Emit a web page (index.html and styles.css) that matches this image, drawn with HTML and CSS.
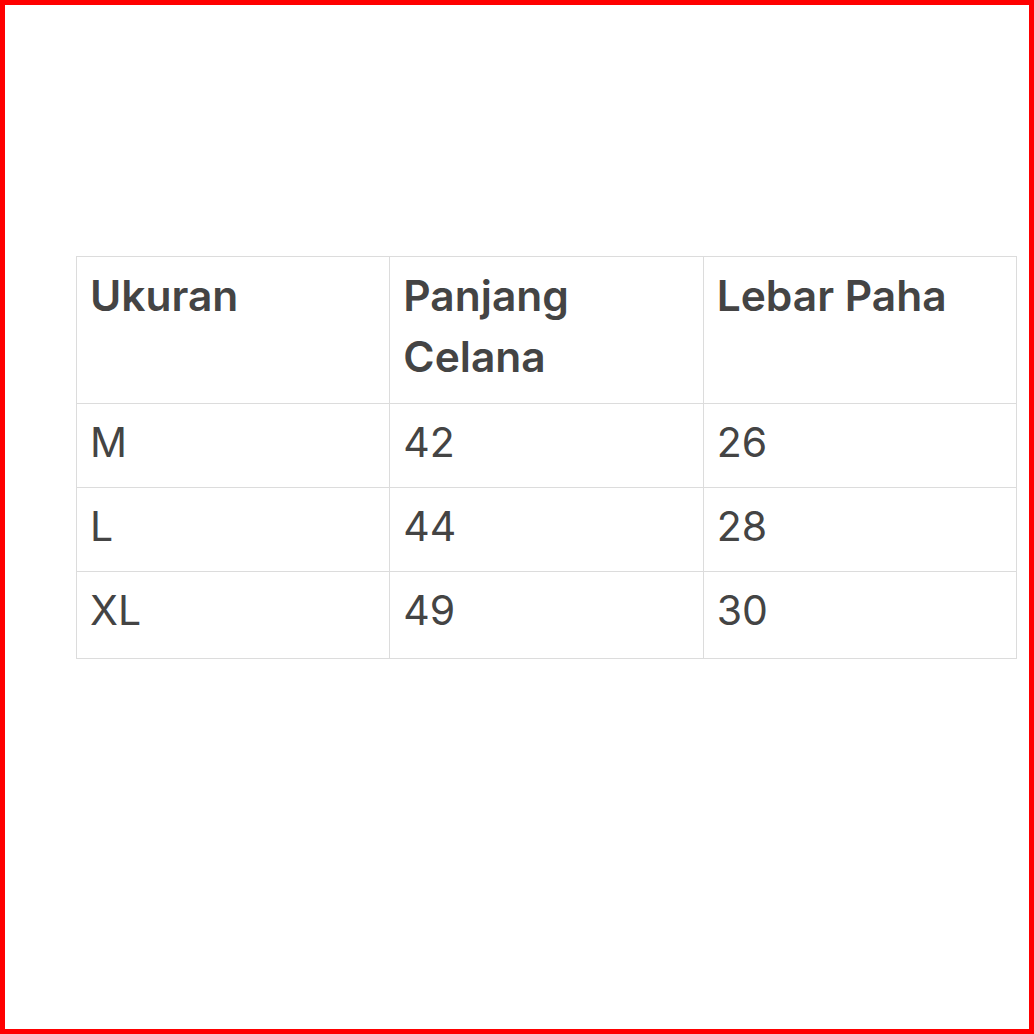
FILE: index.html
```html
<!DOCTYPE html>
<html lang="id">
<head>
<meta charset="utf-8">
<title>Ukuran</title>
<link rel="stylesheet" href="styles.css">
</head>
<body>
<div class="frame">
  <table class="size-table">
    <thead>
      <tr><th>Ukuran</th><th>Panjang Celana</th><th>Lebar Paha</th></tr>
    </thead>
    <tbody>
      <tr><td>M</td><td>42</td><td>26</td></tr>
      <tr><td>L</td><td>44</td><td>28</td></tr>
      <tr class="last"><td>XL</td><td>49</td><td>30</td></tr>
    </tbody>
  </table>
</div>
</body>
</html>
```
FILE: styles.css
```css
html, body { margin: 0; padding: 0; background: #fff; }
.frame {
  box-sizing: border-box;
  width: 1034px;
  height: 1034px;
  border: 5px solid #ff0000;
  padding: 251px 13px 0 71px;
  font-family: Inter, "Noto Sans", sans-serif;
  color: #444;
}
.size-table {
  width: 941px;
  border-collapse: collapse;
  table-layout: fixed;
}
.size-table th, .size-table td {
  border: 1px solid #dcdcdc;
  text-align: left;
  vertical-align: top;
  padding: 8px 13px 14px;
  font-size: 41px;
  line-height: 61px;
}
.size-table th {
  font-weight: 600;
  font-size: 42.5px;
  height: 124px;
}
.size-table td { font-weight: 400; height: 61px; }
.size-table tr.last td { padding-bottom: 17px; }
```
